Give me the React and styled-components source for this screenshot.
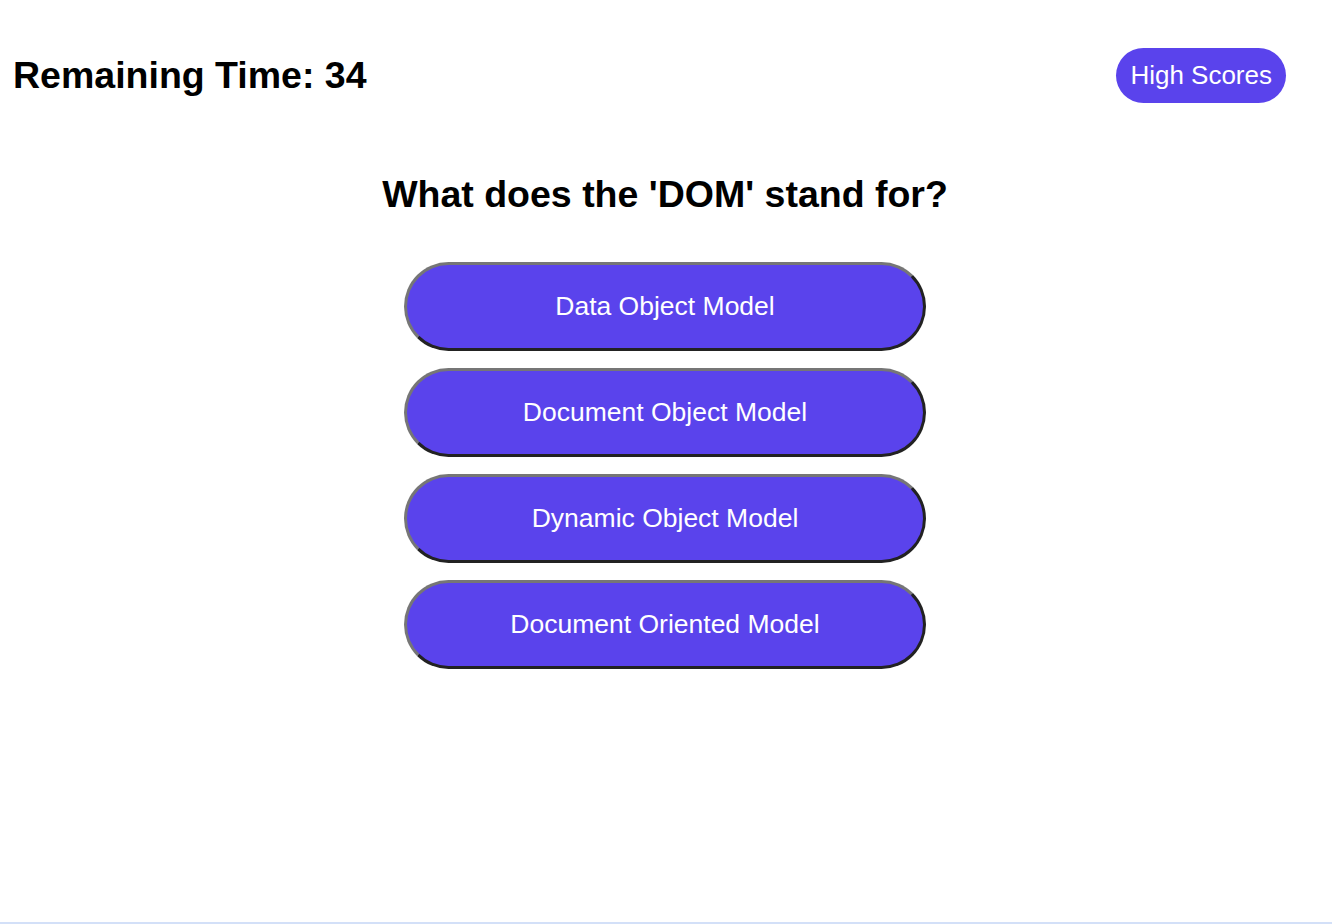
import React from "react";
import styled, { createGlobalStyle } from "styled-components";

const GlobalStyle = createGlobalStyle`
  html, body {
    margin: 0;
    padding: 0;
    background: #fff;
    font-family: "Liberation Sans", Arial, Helvetica, sans-serif;
  }
`;

const Page = styled.div`
  min-height: 100vh;
  display: flex;
  flex-direction: column;
  box-sizing: border-box;
`;

const Main = styled.div`
  flex: 1;
`;

const Header = styled.header`
  display: flex;
  justify-content: space-between;
  align-items: center;
  padding: 48px 46px 0 13px;
`;

const Timer = styled.h1`
  margin: 0;
  font-size: 37.5px;
  font-weight: bold;
  color: #000;
`;

const ScoresButton = styled.button`
  height: 55px;
  padding: 0 14px;
  font-family: inherit;
  font-size: 26px;
  color: #fff;
  background: #5a43ec;
  border: none;
  border-radius: 28px;
  cursor: pointer;
`;

const Quiz = styled.section`
  display: flex;
  flex-direction: column;
  align-items: center;
  padding: 70px 2px 0 0;
`;

const Question = styled.h2`
  margin: 0 0 46px;
  font-size: 37.5px;
  font-weight: bold;
  color: #000;
`;

const Choices = styled.div`
  display: flex;
  flex-direction: column;
  gap: 17px;
`;

const Choice = styled.button`
  width: 522px;
  height: 89px;
  font-family: inherit;
  font-size: 26.5px;
  color: #fff;
  background: #5a43ec;
  border-width: 3px;
  border-style: solid;
  border-top-color: #767676;
  border-left-color: #767676;
  border-right-color: #222;
  border-bottom-color: #222;
  border-radius: 45px;
  cursor: pointer;
`;

const Footer = styled.footer`
  height: 2px;
  background: #d3e0f8;
`;

const choices = [
  "Data Object Model",
  "Document Object Model",
  "Dynamic Object Model",
  "Document Oriented Model",
];

export default function App() {
  return (
    <Page>
      <GlobalStyle />
      <Main>
        <Header>
          <Timer>Remaining Time: 34</Timer>
          <ScoresButton>High Scores</ScoresButton>
        </Header>
        <Quiz>
          <Question>What does the 'DOM' stand for?</Question>
          <Choices>
            {choices.map((c) => (
              <Choice key={c}>{c}</Choice>
            ))}
          </Choices>
        </Quiz>
      </Main>
      <Footer />
    </Page>
  );
}
